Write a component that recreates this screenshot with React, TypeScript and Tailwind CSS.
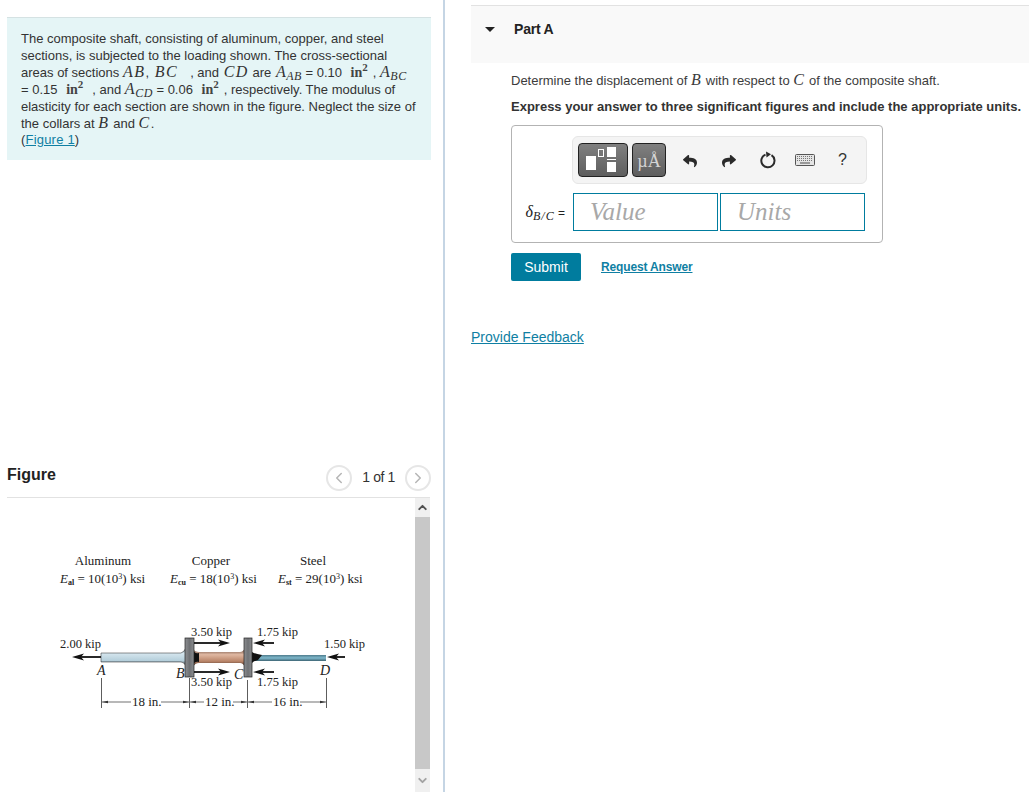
import { ChevronLeft, ChevronRight, ChevronUp, ChevronDown } from 'lucide-react';
import { FaReply, FaShare } from 'react-icons/fa';

function M({ children, className }: { children: React.ReactNode; className?: string }) {
  return <span className={`font-['Liberation_Serif'] italic text-[16px] tracking-[1.5px] leading-[0] ${className ?? ''}`}>{children}</span>;
}

function Area({ sub, className }: { sub: string; className?: string }) {
  return (
    <span className={`font-['Liberation_Serif'] italic text-[16px] leading-[0] tracking-[0.5px] ${className ?? ''}`}>
      A<span className="text-[12px] leading-[0] align-[-3px] font-medium">{sub}</span>
    </span>
  );
}

function Unit() {
  return (
    <span className="font-['Liberation_Serif'] font-bold text-[14px] leading-[0] mx-[5px] text-[#444]">
      in<span className="text-[11px] leading-[0] align-[6px]">2</span>
    </span>
  );
}

function Arrow({ x1, x2, y }: { x1: number; x2: number; y: number }) {
  const d = x2 > x1 ? -1 : 1;
  return (
    <g>
      <line x1={x1} y1={y} x2={x2 + d * 8} y2={y} stroke="#111" strokeWidth="1.8" />
      <polygon points={`${x2},${y} ${x2 + d * 12},${y - 3.5} ${x2 + d * 9},${y} ${x2 + d * 12},${y + 3.5}`} fill="#111" />
    </g>
  );
}

function Dim({ x1, x2 }: { x1: number; x2: number }) {
  return (
    <g>
      <line x1={x1} y1="702" x2={x2} y2="702" stroke="#333" strokeWidth="0.7" />
      <polygon points={`${x1},702 ${x1 + 6},700.8 ${x1 + 6},703.2`} fill="#333" />
      <polygon points={`${x2},702 ${x2 - 6},700.8 ${x2 - 6},703.2`} fill="#333" />
    </g>
  );
}

function ShaftFigure() {
  return (
    <svg viewBox="7 498 408 294" className="w-[408px] h-[294px] block font-['Liberation_Serif']" fontSize="12.5" fill="#222">
      <defs>
        <linearGradient id="al" x1="0" y1="0" x2="0" y2="1">
          <stop offset="0" stopColor="#5f6f78" />
          <stop offset="0.3" stopColor="#d5e6ee" />
          <stop offset="0.7" stopColor="#b5cfdb" />
          <stop offset="1" stopColor="#23282b" />
        </linearGradient>
        <linearGradient id="cu" x1="0" y1="0" x2="0" y2="1">
          <stop offset="0" stopColor="#54392e" />
          <stop offset="0.35" stopColor="#e0b8a2" />
          <stop offset="0.7" stopColor="#b98468" />
          <stop offset="1" stopColor="#2b1c15" />
        </linearGradient>
        <linearGradient id="st" x1="0" y1="0" x2="0" y2="1">
          <stop offset="0" stopColor="#4f7c8c" />
          <stop offset="0.5" stopColor="#7fb9cd" />
          <stop offset="1" stopColor="#3d6473" />
        </linearGradient>
        <linearGradient id="collar" x1="0" y1="0" x2="1" y2="0">
          <stop offset="0" stopColor="#8d8f92" />
          <stop offset="0.5" stopColor="#6f7174" />
          <stop offset="1" stopColor="#8b8d90" />
        </linearGradient>
      </defs>

      <text x="103" y="565" fontSize="13" textAnchor="middle">Aluminum</text>
      <text x="211" y="565" fontSize="13" textAnchor="middle">Copper</text>
      <text x="313" y="565" fontSize="13" textAnchor="middle">Steel</text>

      <text x="60" y="583" fontSize="13">
        <tspan fontStyle="italic">E</tspan><tspan fontSize="8" dy="2" fontWeight="bold">al</tspan>
        <tspan dy="-2"> = 10(10</tspan><tspan fontSize="8" dy="-4">3</tspan><tspan dy="4">) ksi</tspan>
      </text>
      <text x="170" y="583" fontSize="13">
        <tspan fontStyle="italic">E</tspan><tspan fontSize="8" dy="2" fontWeight="bold">cu</tspan>
        <tspan dy="-2"> = 18(10</tspan><tspan fontSize="8" dy="-4">3</tspan><tspan dy="4">) ksi</tspan>
      </text>
      <text x="278" y="583" fontSize="13">
        <tspan fontStyle="italic">E</tspan><tspan fontSize="8" dy="2" fontWeight="bold">st</tspan>
        <tspan dy="-2"> = 29(10</tspan><tspan fontSize="8" dy="-4">3</tspan><tspan dy="4">) ksi</tspan>
      </text>

      {/* shaft sections */}
      <path d="M101 653 H181 Q184 652 186 648 V666 Q184 662 181 662 H101 Z" fill="url(#al)" stroke="#222" strokeWidth="0.5" />
      <path d="M193 649 Q195 652 199 652 H240 Q243 652 245 648 V667 Q243 663 240 663 H199 Q195 663 193 667 Z" fill="url(#cu)" />
      <path d="M193 649 Q194 654 199 653 L199 662 Q194 661 193 666 Z" fill="#111" />
      <rect x="252" y="655" width="74" height="6" fill="url(#st)" />
      <path d="M252 652 Q255 654 262 655 L258 660 Q254 661 252 663 Z" fill="#111" />
      <rect x="185" y="638" width="9" height="39" fill="url(#collar)" stroke="#222" strokeWidth="0.7" />
      <rect x="244" y="638" width="8" height="39" fill="url(#collar)" stroke="#222" strokeWidth="0.7" />

      {/* loads */}
      <Arrow x1={101} x2={72} y={657} />
      <Arrow x1={345} x2={327} y={657} />
      <Arrow x1={194} x2={230} y={643} />
      <Arrow x1={194} x2={230} y={672} />
      <Arrow x1={274} x2={253} y={643} />
      <Arrow x1={274} x2={253} y={672} />

      <text x="191" y="636">3.50 kip</text>
      <text x="257" y="636">1.75 kip</text>
      <text x="60" y="648">2.00 kip</text>
      <text x="324" y="648">1.50 kip</text>
      <text x="191" y="686">3.50 kip</text>
      <text x="257" y="686">1.75 kip</text>

      <g fontStyle="italic" fontSize="14">
        <text x="97" y="675">A</text>
        <text x="176" y="678">B</text>
        <text x="234" y="679">C</text>
        <text x="320" y="675">D</text>
      </g>

      {/* dimensions */}
      <g stroke="#333" strokeWidth="0.8">
        <line x1="101.5" y1="678" x2="101.5" y2="708" />
        <line x1="189.5" y1="678" x2="189.5" y2="708" />
        <line x1="247.5" y1="680" x2="247.5" y2="708" />
        <line x1="326.5" y1="678" x2="326.5" y2="708" />
      </g>
      <Dim x1={102} x2={189} />
      <Dim x1={190} x2={247} />
      <Dim x1={248} x2={326} />
      <g fontSize="13">
        <rect x="131" y="695" width="30" height="12" fill="#fff" />
        <text x="132" y="706">18 in.</text>
        <rect x="204" y="695" width="29" height="12" fill="#fff" />
        <text x="205" y="706">12 in.</text>
        <rect x="272" y="695" width="28" height="12" fill="#fff" />
        <text x="273" y="706">16 in.</text>
      </g>
    </svg>
  );
}

function TemplatesIcon() {
  return (
    <svg viewBox="0 0 48 32" className="w-[48px] h-[32px]">
      <rect x="7" y="12" width="10" height="14" fill="#fff" />
      <rect x="19.5" y="5.5" width="5" height="7" fill="none" stroke="#fff" strokeWidth="1" />
      <rect x="28" y="3" width="9" height="10" fill="#fff" />
      <rect x="28" y="15" width="9" height="1" fill="#fff" />
      <rect x="28" y="18" width="9" height="10" fill="#fff" />
    </svg>
  );
}

function ResetIcon() {
  return (
    <svg viewBox="0 0 18 18" className="w-[18px] h-[18px]" fill="none">
      <path d="M12.5 4.2 A6.6 6.6 0 1 1 6.5 3.6" stroke="#2a2a2a" strokeWidth="2" />
      <polygon points="7,0.5 12,3.2 7.5,6.5" fill="#2a2a2a" />
    </svg>
  );
}

function KeyboardIcon() {
  return (
    <svg viewBox="0 0 20 12" className="w-[20px] h-[12px]">
      <rect x="0.5" y="0.5" width="19" height="11" rx="1" fill="#e4e4e4" stroke="#555" />
      <g stroke="#777" strokeWidth="1" strokeDasharray="1 1">
        <line x1="2" y1="2.5" x2="18" y2="2.5" />
        <line x1="2" y1="4.5" x2="18" y2="4.5" />
        <line x1="2" y1="6.5" x2="18" y2="6.5" />
      </g>
      <line x1="5" y1="9" x2="15" y2="9" stroke="#666" strokeWidth="1.2" />
    </svg>
  );
}

export default function App() {
  return (
    <div className="flex h-[792px] overflow-hidden bg-white font-['Liberation_Sans',sans-serif] text-[13px] text-[#333]">
      {/* Left column */}
      <div className="w-[445px] shrink-0 flex flex-col border-r-2 border-[#c5d5e4] pl-[7px]">
        <div className="mt-[17px] w-[424px] h-[144px] bg-[#e5f5f6] border-t border-[#d5e2e3] pl-[14px] pt-[12px] leading-[17px]">
          <p className="h-[17px] whitespace-nowrap">The composite shaft, consisting of aluminum, copper, and steel</p>
          <p className="h-[17px] whitespace-nowrap">sections, is subjected to the loading shown. The cross-sectional</p>
          <p className="h-[17px] whitespace-nowrap">
            areas of sections <M>AB</M>, <M className="ml-[2px]">BC</M><span className="ml-[12px]">, and</span> <M className="ml-[1px]">CD</M> are <Area sub="AB" className="ml-[1px]" /> = 0.10 <Unit />, <Area sub="BC" />
          </p>
          <p className="h-[17px] whitespace-nowrap">
            = 0.15 <Unit /><span className="ml-[4px]">, and</span> <Area sub="CD" /> = 0.06 <Unit />, respectively. The modulus of
          </p>
          <p className="h-[17px] whitespace-nowrap">elasticity for each section are shown in the figure. Neglect the size of</p>
          <p className="h-[16px] whitespace-nowrap">
            the collars at <M>B</M> and <M>C</M>.
          </p>
          <p className="text-[13px] tracking-[0.2px]">
            (<a className="text-[#0f7fa3] underline" href="#">Figure 1</a>)
          </p>
        </div>

        <div className="mt-[297px] h-[40px] w-[424px] flex items-center justify-between">
          <h2 className="text-[16px] font-bold text-[#222] -mt-[5px]">Figure</h2>
          <div className="flex items-center mt-[1px]">
            <span className="w-[26px] h-[26px] rounded-full border-2 border-[#e6e6e6] flex items-center justify-center text-[#b5b5b5]">
              <ChevronLeft size={18} strokeWidth={2} />
            </span>
            <span className="mx-[10px] text-[14px] tracking-[-0.4px] text-[#333]">1 of 1</span>
            <span className="w-[26px] h-[26px] rounded-full border-2 border-[#e6e6e6] flex items-center justify-center text-[#b5b5b5]">
              <ChevronRight size={18} strokeWidth={2} />
            </span>
          </div>
        </div>

        <div className="flex w-[423px] h-[295px] border-t border-[#e2e2e2]">
          <div className="w-[408px] h-[294px] shrink-0">
            <ShaftFigure />
          </div>
          <div className="w-[15px] flex flex-col">
            <div className="h-[19px] bg-[#f0f0f0] flex items-center justify-center text-[#505050]">
              <ChevronUp size={13} strokeWidth={3.5} />
            </div>
            <div className="flex-1 bg-[#c8c8c8]" />
            <div className="h-[23px] bg-[#f0f0f0] flex items-center justify-center text-[#a3a3a3]">
              <ChevronDown size={13} strokeWidth={3.5} />
            </div>
          </div>
        </div>
      </div>

      {/* Right column */}
      <div className="flex-1 pl-[26px] pt-[5px]">
        <div className="h-[58px] border-t border-[#e2e2e2] bg-[#f9f9f9] flex items-start pt-[15px] text-[14px] leading-[17px]">
          <span className="mt-[6px] ml-[14px] w-0 h-0 border-x-[5px] border-x-transparent border-t-[5px] border-t-[#222]" />
          <span className="ml-[19px] font-bold tracking-[-0.2px] text-[#222]">Part A</span>
        </div>

        <div className="pl-[40px]">
          <p className="mt-[9px] h-[17px] leading-[17px] whitespace-nowrap text-[#3c3c3c]">
            Determine the displacement of <M>B</M> with respect to <M>C</M> of the composite shaft.
          </p>
          <p className="mt-[9px] h-[17px] leading-[17px] font-bold whitespace-nowrap text-[#333]">
            Express your answer to three significant figures and include the appropriate units.
          </p>

          <div className="mt-[10px] w-[372px] h-[118px] border border-[#b3b3b3] rounded-[4px] pt-[10px]">
            <div className="ml-[60px] w-[295px] h-[48px] bg-[#f4f4f4] border border-[#e6e6e6] rounded-[6px] flex items-center pl-[5px]">
              <button className="w-[50px] h-[34px] rounded-[4px] border border-[#222] bg-gradient-to-b from-[#808080] to-[#5e5e5e] flex items-center justify-center">
                <TemplatesIcon />
              </button>
              <button className="ml-[4px] w-[34px] h-[34px] rounded-[4px] border border-[#222] bg-gradient-to-b from-[#808080] to-[#5e5e5e] font-['Liberation_Serif'] text-[18px] leading-[34px] text-[#d4d4d4]">
                µÅ
              </button>
              <span className="ml-[17px] mt-[2px] text-[#2a2a2a]"><FaReply size={14} /></span>
              <span className="ml-[25px] mt-[2px] text-[#2a2a2a]"><FaShare size={14} /></span>
              <span className="ml-[23px]"><ResetIcon /></span>
              <span className="ml-[18px]"><KeyboardIcon /></span>
              <span className="ml-[23px] text-[#333] text-[16px]">?</span>
            </div>

            <div className="mt-[9px] flex items-center">
              <span className="w-[61px] text-right pr-[8px] whitespace-nowrap font-['Liberation_Serif'] italic text-[16px] text-[#222]">
                δ<span className="text-[12px] align-[-3px] leading-[0] tracking-[1px]">B/C</span>
                <span className="not-italic font-['Liberation_Sans'] text-[12px]"> =</span>
              </span>
              <div className="w-[145px] h-[38px] border border-[#007c9e] flex items-center pl-[16px] font-['Liberation_Serif'] italic text-[25px] text-[#a8a8a8]">Value</div>
              <div className="ml-[2px] w-[145px] h-[38px] border border-[#007c9e] flex items-center pl-[16px] font-['Liberation_Serif'] italic text-[25px] text-[#a8a8a8]">Units</div>
            </div>
          </div>

          <div className="mt-[10px] flex items-center">
            <button className="w-[70px] h-[28px] bg-[#007c9e] rounded-[2px] text-white text-[14px]">Submit</button>
            <a href="#" className="ml-[20px] text-[12px] tracking-[-0.15px] font-bold text-[#0f7fa3] underline">Request Answer</a>
          </div>
        </div>

        <a href="#" className="block mt-[48px] text-[14px] leading-[17px] text-[#0f7fa3] underline">Provide Feedback</a>
      </div>
    </div>
  );
}
